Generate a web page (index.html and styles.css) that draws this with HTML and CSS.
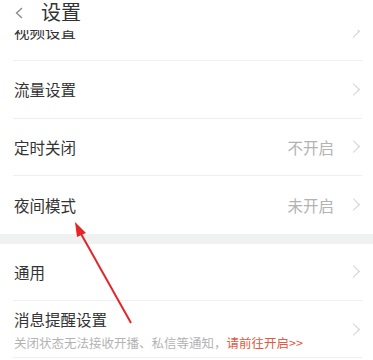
FILE: index.html
```html
<!DOCTYPE html>
<html lang="zh-CN">
<head>
    <meta charset="UTF-8">
    <meta name="viewport" content="width=device-width, initial-scale=1.0">
    <title>设置</title>
    <link rel="stylesheet" href="styles.css">
</head>
<body>
    <div class="page">
        <div class="header">
            <svg class="back" width="8" height="12" viewBox="0 0 8 12"><path d="M7 1 L1.5 6 L7 11" fill="none" stroke="#888" stroke-width="1.3"/></svg>
            <span class="title">设置</span>
        </div>
        <div class="clip">
            <div class="row">
                <span class="label">视频设置</span>
                <span class="chev"></span>
            </div>
        </div>
        <div class="row">
            <span class="label">流量设置</span>
            <span class="chev"></span>
        </div>
        <div class="row">
            <span class="label">定时关闭</span>
            <span class="value">不开启</span>
            <span class="chev"></span>
        </div>
        <div class="row last">
            <span class="label">夜间模式</span>
            <span class="value">未开启</span>
            <span class="chev"></span>
        </div>
        <div class="band"></div>
        <div class="row">
            <span class="label">通用</span>
            <span class="chev"></span>
        </div>
        <div class="row tall">
            <div class="stack">
                <span class="label">消息提醒设置</span>
                <span class="sub">关闭状态无法接收开播、私信等通知，<b>请前往开启&gt;&gt;</b></span>
            </div>
            <span class="chev"></span>
        </div>

        <svg class="arrow" width="373" height="360" viewBox="0 0 373 360">
            <line x1="131" y1="323" x2="80" y2="232" stroke="#e3262a" stroke-width="2"/>
            <polygon points="75,222 86,233 77,237" fill="#e3262a"/>
        </svg>
    </div>
</body>
</html>
```

FILE: styles.css
```css
body {
    margin: 0;
    background: #fff;
    font-family: "Noto Sans CJK SC", "Noto Sans", sans-serif;
    color: #333;
}
.page {
    position: relative;
    width: 373px;
    height: 360px;
    overflow: hidden;
    background: #fff;
}
.header {
    height: 30px;
    display: flex;
    align-items: center;
    padding-left: 15px;
    padding-bottom: 6px;
    box-sizing: border-box;
    background: #fff;
}
.back {
    margin-top: 2px;
}
.title {
    font-size: 20px;
    margin-left: 18px;
    line-height: 1;
    color: #333;
}
.clip {
    height: 31px;
    overflow: hidden;
}
.clip .row {
    margin-top: -27px;
}
.row {
    display: flex;
    align-items: center;
    height: 57.5px;
    margin: 0 11px 0 13px;
    border-bottom: 1px solid #efefef;
    box-sizing: border-box;
}
.row.last {
    border-bottom: none;
}
.label {
    flex-grow: 1;
    font-size: 15.5px;
    padding-left: 1px;
    color: #333;
}
.value {
    font-size: 15.5px;
    color: #b3b3b3;
    margin-right: 15px;
}
.chev {
    width: 8px;
    height: 8px;
    border-top: 1.2px solid #cfcfcf;
    border-right: 1.2px solid #cfcfcf;
    transform: rotate(45deg);
    margin-right: 4px;
}
.band {
    height: 10px;
    background: #f0f2f1;
}
.tall {
    height: 57px;
}
.stack {
    flex-grow: 1;
    display: flex;
    flex-direction: column;
    padding-top: 2px;
}
.sub {
    font-size: 12.5px;
    color: #b3b3b3;
    margin-top: 3px;
    padding-left: 1px;
}
.sub b {
    font-weight: normal;
    color: #e2593f;
}
.arrow {
    position: absolute;
    left: 0;
    top: 0;
}
```
